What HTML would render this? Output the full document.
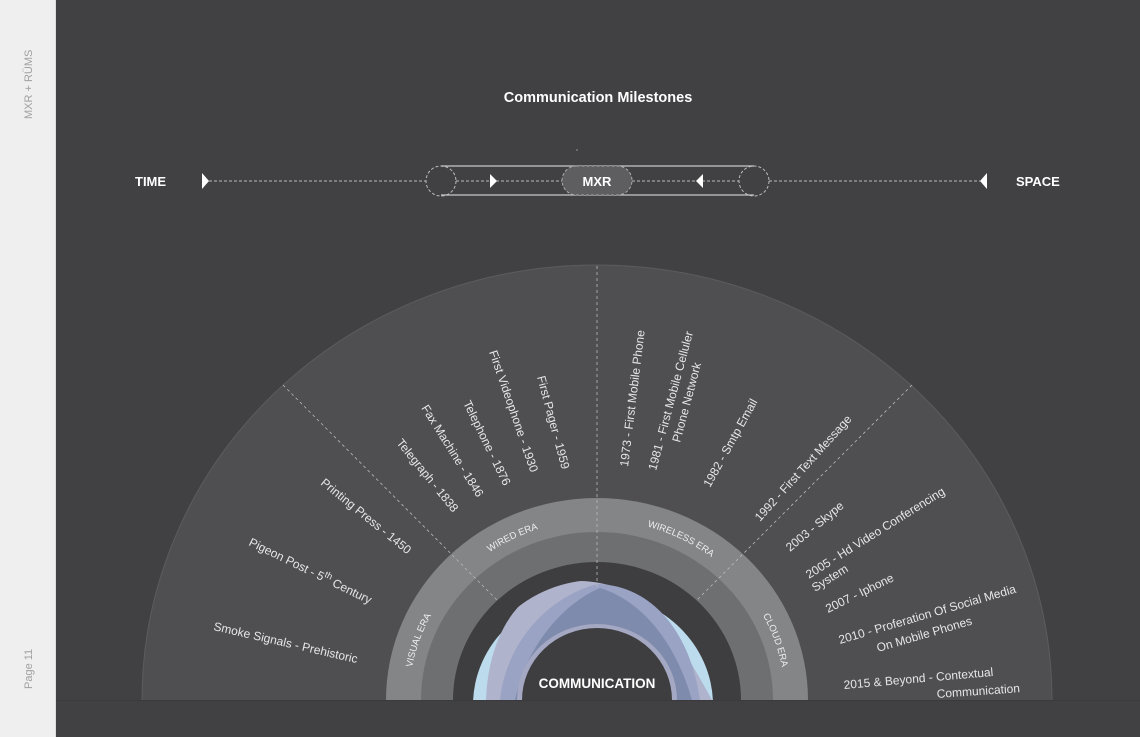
<!DOCTYPE html>
<html><head><meta charset="utf-8"><style>
html,body{margin:0;padding:0;width:1140px;height:737px;overflow:hidden;background:#414143;font-family:"Liberation Sans",sans-serif}
#side{position:absolute;left:0;top:0;width:55px;height:737px;background:#efeff0;border-right:1px solid #dcdcdc;z-index:2}
.vt{position:absolute;color:#a0a0a0;font-size:11px;white-space:nowrap;transform-origin:0 0;transform:rotate(-90deg)}
svg{position:absolute;left:0;top:0}
</style></head><body>
<div id="side">
<div class="vt" style="left:23px;top:119px">MXR + RÜMS</div>
<div class="vt" style="left:23px;top:689px">Page 11</div>
</div>
<svg width="1140" height="737" viewBox="0 0 1140 737" font-family="Liberation Sans, sans-serif">
<defs>
<clipPath id="top"><rect x="0" y="0" width="1140" height="700"/></clipPath>
<clipPath id="ring"><path d="M472,700 A125 120 0 0 1 722,700 Z"/></clipPath>
</defs>
<text x="598" y="102" fill="#fff" font-size="14.5" font-weight="bold" text-anchor="middle">Communication Milestones</text>
<text x="135" y="186" fill="#fff" font-size="13" font-weight="bold">TIME</text>
<text x="1016" y="186" fill="#fff" font-size="13" font-weight="bold">SPACE</text>
<g stroke="#bbb" stroke-width="1" fill="none" stroke-dasharray="3 2">
<line x1="209" y1="181" x2="426" y2="181"/>
<line x1="456" y1="181" x2="562" y2="181"/>
<line x1="632" y1="181" x2="739" y2="181"/>
<line x1="769" y1="181" x2="980" y2="181"/>
<ellipse cx="441" cy="181" rx="15" ry="15"/>
<ellipse cx="754" cy="181" rx="15" ry="15"/>
</g>
<g stroke="#c8c8c8" stroke-width="1.2"><line x1="441" y1="166" x2="754" y2="166"/><line x1="441" y1="195" x2="754" y2="195"/></g>
<rect x="562" y="166" width="70" height="29" rx="14.5" fill="#5e5e60" stroke="#aaa" stroke-dasharray="3 2"/>
<text x="597" y="186" fill="#fff" font-size="13" font-weight="bold" text-anchor="middle">MXR</text>
<g fill="#fff">
<polygon points="202,173 209,181 202,189"/>
<polygon points="490,174 497,181 490,188"/>
<polygon points="703,174 696,181 703,188"/>
<polygon points="987,173 980,181 987,189"/>
</g>
<g clip-path="url(#top)">
<ellipse cx="597" cy="700" rx="455" ry="435" fill="#4f4f51" stroke="#5c5c5e" stroke-width="1"/>
<ellipse cx="597" cy="700" rx="211" ry="202" fill="#848587"/>
<ellipse cx="597" cy="700" rx="176" ry="168" fill="#6e6f71"/>
<ellipse cx="597" cy="700" rx="144" ry="138" fill="#3e3e40"/>
<g clip-path="url(#ring)">
<ellipse cx="593" cy="705" rx="120" ry="112" fill="#bcdcee"/>
<path d="M486,700 C488,640 515,592 560,582 C590,578 620,585 640,600 C670,625 690,660 712,700 Z" fill="#b0b3cc"/>
<path d="M500,700 C505,650 540,600 597,584 C650,585 690,630 700,700 Z" fill="#9aa3c4"/>
<path d="M515,700 C525,650 560,605 600,588 C640,600 675,640 692,700 Z" fill="#7f8bad"/>
</g>
<ellipse cx="597" cy="700" rx="80" ry="76" fill="#a4a8c2"/>
<ellipse cx="597" cy="700" rx="75" ry="72" fill="#3e3e40"/>
</g>
<line x1="56" y1="700.5" x2="1140" y2="700.5" stroke="#3a3a3c"/>
<g stroke="#b8b8b8" stroke-width="0.8" stroke-dasharray="3 3" fill="none">
<line x1="597" y1="266" x2="597" y2="588"/>
<line x1="283" y1="385" x2="497" y2="600"/>
<line x1="912" y1="385" x2="697" y2="600"/>
</g>
<text x="597" y="688" fill="#fff" font-size="13.5" font-weight="bold" text-anchor="middle">COMMUNICATION</text>
<path id="era" d="M409,700 A188 180 0 0 1 785,700" fill="none"/>
<g fill="#eee" font-size="9.5" text-anchor="middle">
<text><textPath href="#era" startOffset="10.5%">VISUAL ERA</textPath></text>
<text><textPath href="#era" startOffset="35%">WIRED ERA</textPath></text>
<text><textPath href="#era" startOffset="65%">WIRELESS ERA</textPath></text>
<text><textPath href="#era" startOffset="89.5%">CLOUD ERA</textPath></text>
</g>
<g fill="#e6e6e6" font-size="12">
<text transform="translate(213,630) rotate(13)">Smoke Signals - Prehistoric</text>
<text transform="translate(248,545) rotate(26)">Pigeon Post - 5<tspan font-size="9" dy="-5">th</tspan><tspan dy="5"> Century</tspan></text>
<text transform="translate(320,484) rotate(39)">Printing Press - 1450</text>
<text transform="translate(396,443) rotate(51)">Telegraph - 1838</text>
<text transform="translate(421,408) rotate(58)">Fax Machine - 1846</text>
<text transform="translate(463,403) rotate(64)">Telephone - 1876</text>
<text transform="translate(489,352) rotate(71)">First Videophone - 1930</text>
<text transform="translate(537,377) rotate(75)">First Pager - 1959</text>
<text transform="translate(628,467) rotate(-83)">1973 - First Mobile Phone</text>
<text transform="translate(656,471) rotate(-75)">1981 - First Mobile Celluler</text>
<text transform="translate(680,443) rotate(-75)">Phone Network</text>
<text transform="translate(710,488) rotate(-61)">1982 - Smtp Email</text>
<text transform="translate(760,522) rotate(-48)">1992 - First Text Message</text>
<text transform="translate(790,552) rotate(-39.5)">2003 - Skype</text>
<text transform="translate(809,579) rotate(-32)">2005 - Hd Video Conferencing</text>
<text transform="translate(815,592) rotate(-32)">System</text>
<text transform="translate(828,613) rotate(-26)">2007 - Iphone</text>
<text transform="translate(840,644) rotate(-16.3)">2010 - Proferation Of Social Media</text>
<text transform="translate(878,652) rotate(-16.3)">On Mobile Phones</text>
<text transform="translate(844,689) rotate(-5)">2015 &amp; Beyond - Contextual</text>
<text transform="translate(937,698) rotate(-4)">Communication</text>
</g>
<circle cx="577" cy="150" r="0.7" fill="#aaa"/>
</svg>
</body></html>
